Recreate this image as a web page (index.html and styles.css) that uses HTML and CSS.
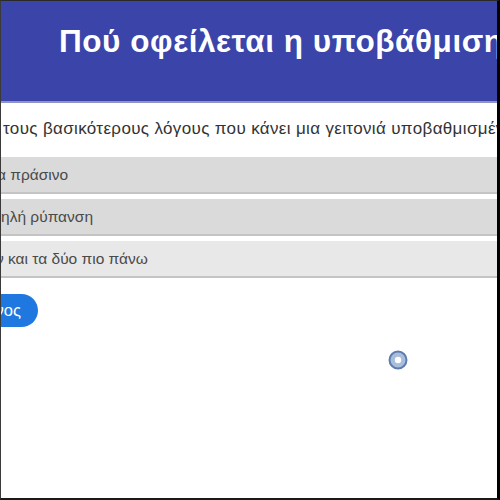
FILE: index.html
```html
<!DOCTYPE html>
<html lang="el">
<head>
<meta charset="utf-8">
<link rel="stylesheet" href="styles.css">
</head>
<body>
<div class="frame">
  <header class="hero">
    <h1 class="title">Πού οφείλεται η υποβάθμιση μιας γειτονιάς;</h1>
  </header>
  <main class="content">
    <p class="question">τους βασικότερους λόγους που κάνει μια γειτονιά υποβαθμισμένη</p>
    <div class="options">
      <div class="option"><span class="label label-1">α πράσινο</span></div>
      <div class="option"><span class="label label-2">ψηλή ρύπανση</span></div>
      <div class="option option-light"><span class="label label-3">ν και τα δύο πιο πάνω</span></div>
    </div>
    <div class="actions">
      <button class="next">Επόμενος</button>
    </div>
    <div class="cursor-row">
      <svg class="cursor" width="20" height="20" viewBox="0 0 20 20">
        <circle cx="10" cy="10" r="8.5" fill="#a9bddd" stroke="#5f7cae" stroke-width="2"/>
        <circle cx="10" cy="10" r="3.2" fill="#ffffff"/>
      </svg>
    </div>
  </main>
</div>
</body>
</html>
```

FILE: styles.css
```css
html, body {
  margin: 0;
  padding: 0;
  background: #ffffff;
}

.frame {
  width: 500px;
  height: 500px;
  box-sizing: border-box;
  border-style: solid;
  border-color: #2a2a2a #000000 #1a1a1a #3a3a3a;
  border-width: 1px 3px 2px 1px;
  overflow: hidden;
  font-family: "Liberation Sans", Arial, sans-serif;
  background: #ffffff;
}

.hero {
  height: 100px;
  background: #3a44a9;
  border-bottom: 2px solid #8e94c8;
  display: flex;
  align-items: flex-start;
  padding-left: 58px;
  white-space: nowrap;
}

.title {
  margin: 22px 0 0 0;
  font-size: 31.5px;
  font-weight: bold;
  color: #ffffff;
  letter-spacing: 0.55px;
}

.content {
  display: flex;
  flex-direction: column;
}

.question {
  margin: 16px 0 0 0;
  padding-left: 2px;
  font-size: 17px;
  letter-spacing: 0.35px;
  color: #333333;
  white-space: nowrap;
}

.options {
  margin-top: 18px;
  display: flex;
  flex-direction: column;
  gap: 5px;
}

.option {
  height: 35px;
  background: #dadada;
  border-bottom: 2px solid #c4c4c4;
  display: flex;
  align-items: center;
  white-space: nowrap;
}

.option-light {
  background: #e8e8e8;
}

.label {
  font-size: 15.5px;
  color: #4a4a4a;
}

.label-1 { margin-left: -4px; }
.label-2 { margin-left: -11px; }
.label-3 { margin-left: -5px; }

.actions {
  margin-top: 16px;
  display: flex;
}

.next {
  width: 100px;
  height: 33px;
  margin-left: -63px;
  border: none;
  border-radius: 17px;
  background: #1f78df;
  color: #ffffff;
  font-family: "Liberation Sans", Arial, sans-serif;
  font-size: 16.5px;
  display: flex;
  align-items: center;
  justify-content: flex-end;
  padding: 0 17px 0 0;
}

.cursor-row {
  margin-top: 23px;
  padding-left: 387px;
  display: flex;
}
```
